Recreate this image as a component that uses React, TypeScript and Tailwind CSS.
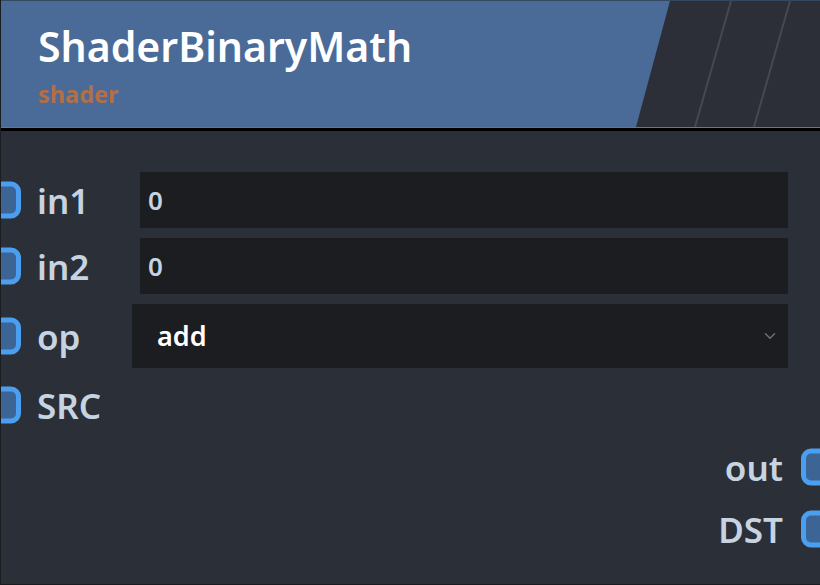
import { FiChevronDown } from "react-icons/fi";

const font = { fontFamily: '"Noto Sans", "Open Sans", sans-serif' };

const Port = ({ side }: { side: "left" | "right" }) => (
  <span
    className={`absolute top-1/2 -translate-y-1/2 h-[37px] w-[33px] rounded-[10px] border-[5px] border-[#4a9ff0] bg-[#3c6595] ${
      side === "left" ? "-left-[13px]" : "-right-[14px]"
    }`}
  />
);

const InputRow = ({ label, value }: { label: string; value: string }) => (
  <div className="relative flex h-[56px] items-center">
    <Port side="left" />
    <span className="w-[139px] shrink-0 pl-[36px] text-[35px] font-semibold leading-none text-[#c6d4e1]">
      {label}
    </span>
    <div className="flex h-full flex-1 items-center bg-[#1b1d21] pl-[8px] text-[26px] font-semibold text-[#c6d4e1]">
      {value}
    </div>
  </div>
);

const PortRow = ({ label, side }: { label: string; side: "left" | "right" }) => (
  <div
    className={`relative flex h-[50px] items-center text-[35px] font-semibold leading-none text-[#c6d4e1] ${
      side === "left" ? "pl-[36px]" : "justify-end pr-[37px]"
    }`}
  >
    <Port side={side} />
    {label}
  </div>
);

export default function App() {
  return (
    <div
      style={font}
      className="flex h-[585px] w-[820px] flex-col overflow-hidden border-b border-l border-[#1a1c20] bg-[#2b2f37]"
    >
      <header className="relative h-[128px] shrink-0 border-t border-[#34485f] border-b border-b-[#557ba6] bg-[#4a6b97]">
        <svg className="absolute inset-0" width="820" height="126" viewBox="0 0 820 126">
          <polygon points="669,0 820,0 820,126 635,126" fill="#2c2f37" />
          <line x1="730" y1="0" x2="694" y2="126" stroke="#45484e" strokeWidth="2" />
          <line x1="789" y1="0" x2="753" y2="126" stroke="#45484e" strokeWidth="2" />
        </svg>
        <div className="relative pl-[37px] pt-[21px]">
          <h1 className="text-[41px] font-semibold leading-[48px] text-white">ShaderBinaryMath</h1>
          <p className="mt-[13px] text-[23.5px] font-bold leading-none text-[#b36f45]">shader</p>
        </div>
      </header>
      <div className="h-[3px] shrink-0 bg-black" />
      <div className="flex flex-col gap-[10px] pr-[32px] pt-[41px]">
        <InputRow label="in1" value="0" />
        <InputRow label="in2" value="0" />
        <div className="relative flex h-[64px] items-center">
          <Port side="left" />
          <span className="w-[131px] shrink-0 pl-[36px] text-[35px] font-semibold leading-none text-[#c6d4e1]">
            op
          </span>
          <div className="flex h-full flex-1 items-center justify-between bg-[#1b1d21] pl-[25px] pr-[9px] text-[27px] font-semibold text-white">
            add
            <FiChevronDown className="text-[18px] text-[#6b7079]" />
          </div>
        </div>
      </div>
      <div className="mt-[12px] flex flex-col gap-[12px]">
        <PortRow label="SRC" side="left" />
        <PortRow label="out" side="right" />
        <PortRow label="DST" side="right" />
      </div>
    </div>
  );
}
